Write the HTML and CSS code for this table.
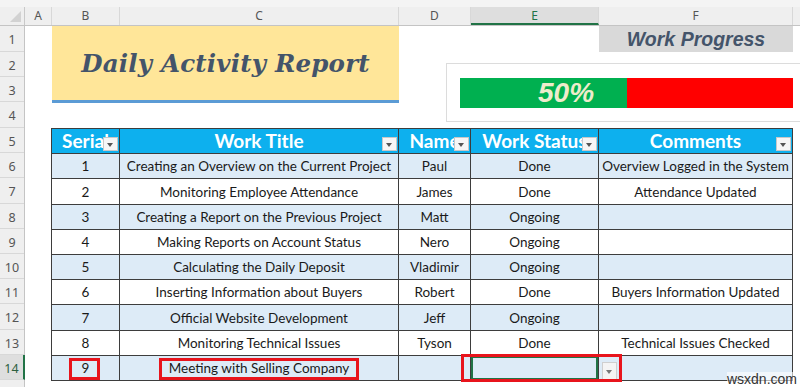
FILE: index.html
```html
<!DOCTYPE html>
<html>
<head>
<meta charset="utf-8">
<link rel="stylesheet" href="styles.css">
</head>
<body>
<div class="app">
  <div class="toolstrip"></div>
  <div class="colhdr">
    <div class="corner"><span class="corner-tri"></span></div>
    <div class="ch w-a">A</div>
    <div class="ch w-b">B</div>
    <div class="ch w-c">C</div>
    <div class="ch w-d">D</div>
    <div class="ch w-e sel">E</div>
    <div class="ch w-f">F</div>
    <div class="ch w-g"></div>
  </div>
  <div class="main">
    <div class="rowhdr">
      <div class="rh h26">1</div>
      <div class="rh h25">2</div>
      <div class="rh h25">3</div>
      <div class="rh h26">4</div>
      <div class="rh h25">5</div>
      <div class="rh h25">6</div>
      <div class="rh h26">7</div>
      <div class="rh h25">8</div>
      <div class="rh h25">9</div>
      <div class="rh h25">10</div>
      <div class="rh h25">11</div>
      <div class="rh h26">12</div>
      <div class="rh h25">13</div>
      <div class="rh h25 sel">14</div>
      <div class="rh h25"></div>
    </div>
    <div class="grid">
      <div class="title"><span>Daily Activity Report</span></div>
      <div class="wp">Work Progress</div>
      <div class="progress">
        <div class="bar">
          <div class="done">50%</div>
          <div class="left"></div>
        </div>
      </div>
      <table class="report">
        <colgroup>
          <col class="c1"><col class="c2"><col class="c3"><col class="c4"><col class="c5">
        </colgroup>
        <thead>
          <tr class="r25">
            <th>Serial<span class="flt"></span></th>
            <th>Work Title<span class="flt"></span></th>
            <th>Name<span class="flt"></span></th>
            <th>Work Status<span class="flt"></span></th>
            <th>Comments<span class="flt"></span></th>
          </tr>
        </thead>
        <tbody>
          <tr class="r25 band"><td>1</td><td>Creating an Overview on the Current Project</td><td>Paul</td><td>Done</td><td>Overview Logged in the System</td></tr>
          <tr class="r26"><td>2</td><td>Monitoring Employee Attendance</td><td>James</td><td>Done</td><td>Attendance Updated</td></tr>
          <tr class="r25 band"><td>3</td><td>Creating a Report on the Previous Project</td><td>Matt</td><td>Ongoing</td><td></td></tr>
          <tr class="r25"><td>4</td><td>Making Reports on Account Status</td><td>Nero</td><td>Ongoing</td><td></td></tr>
          <tr class="r25 band"><td>5</td><td>Calculating the Daily Deposit</td><td>Vladimir</td><td>Ongoing</td><td></td></tr>
          <tr class="r25"><td>6</td><td>Inserting Information about Buyers</td><td>Robert</td><td>Done</td><td>Buyers Information Updated</td></tr>
          <tr class="r26 band"><td>7</td><td>Official Website Development</td><td>Jeff</td><td>Ongoing</td><td></td></tr>
          <tr class="r25"><td>8</td><td>Monitoring Technical Issues</td><td>Tyson</td><td>Done</td><td>Technical Issues Checked</td></tr>
          <tr class="r25 band">
            <td class="pos">9<span class="mark mark-serial"></span></td>
            <td class="pos">Meeting with Selling Company<span class="mark mark-title"></span></td>
            <td></td>
            <td class="pos active"><span class="dd"></span><span class="mark mark-status"></span></td>
            <td></td>
          </tr>
        </tbody>
      </table>
    </div>
  </div>
  <div class="watermark">wsxdn.com</div>
</div>
</body>
</html>
```

FILE: styles.css
```css
html, body {
  margin: 0;
  padding: 0;
  background: #ffffff;
}
body {
  width: 800px;
  height: 387px;
  overflow: hidden;
  font-family: "Lato", "Liberation Sans", sans-serif;
}
.app {
  position: relative;
  width: 800px;
  height: 387px;
  overflow: hidden;
}
.toolstrip {
  height: 7px;
  background: #f4f4f4;
}
.colhdr {
  display: flex;
  height: 18px;
  background: #efefef;
  border-bottom: 1px solid #c4c4c4;
}
.corner {
  position: relative;
  width: 24px;
  border-right: 1px solid #c9c9c9;
}
.corner-tri {
  position: absolute;
  right: 3px;
  bottom: 3px;
  width: 0;
  height: 0;
  border-left: 11px solid transparent;
  border-bottom: 11px solid #d2d2d2;
}
.ch {
  box-sizing: border-box;
  border-right: 1px solid #d8d8d8;
  font-family: "Noto Sans", "Open Sans", sans-serif;
  font-size: 12px;
  color: #555;
  text-align: center;
  line-height: 18px;
}
.w-a { width: 27px; }
.w-b { width: 68px; }
.w-c { width: 279px; }
.w-d { width: 72px; }
.w-e { width: 128px; }
.w-f { width: 194px; }
.w-g { flex: 1; border-right: none; }
.ch.sel {
  background: #dedede;
  color: #217346;
  border-bottom: 2px solid #217346;
  line-height: 17px;
}
.main {
  display: flex;
}
.rowhdr {
  width: 24px;
  flex: none;
  background: #efefef;
  border-right: 1px solid #c4c4c4;
  display: flex;
  flex-direction: column;
}
.rh {
  box-sizing: border-box;
  border-bottom: 1px solid #d8d8d8;
  font-family: "Noto Sans", "Open Sans", sans-serif;
  font-size: 12.5px;
  color: #555;
  text-align: center;
  padding-top: 6px;
  line-height: 16px;
}
.rh.h25 { height: 25px; }
.rh.h26 { height: 26px; }
.rh.sel {
  background: #dedede;
  color: #2d5f3f;
  border-right: 2px solid #217346;
  margin-right: -1px;
}
.grid {
  display: grid;
  grid-template-columns: 27px 68px 279px 72px 128px 194px 1fr;
  grid-template-rows: 26px 25px 25px 26px 25px 25px 26px 25px 25px 25px 25px 26px 25px 25px 25px;
  flex: 1;
}
.title {
  grid-column: 2 / 4;
  grid-row: 1 / 4;
  background: #ffe699;
  border-bottom: 3px solid #5b9bd5;
  margin-bottom: -1px;
  display: flex;
  align-items: center;
  justify-content: center;
}
.title span {
  font-family: "DejaVu Serif", "Liberation Serif", serif;
  font-weight: bold;
  font-style: italic;
  font-size: 24.5px;
  color: #44546a;
  letter-spacing: 0.2px;
  margin-top: 1px;
}
.wp {
  grid-column: 6;
  grid-row: 1;
  background: #d9d9d9;
  font-family: "Liberation Sans", Arial, sans-serif;
  font-weight: bold;
  font-style: italic;
  font-size: 19.5px;
  color: #44546a;
  text-align: center;
  line-height: 26px;
}
.progress {
  grid-column: 4 / 8;
  grid-row: 2 / 5;
  margin: 11px -20px 6px 47px;
  border: 1px solid #dcdcdc;
  padding: 14px 0 0 13px;
}
.bar {
  display: flex;
  height: 30px;
}
.done {
  width: 167px;
  background: #00b050;
  box-sizing: border-box;
  padding-left: 78px;
  font-family: "Liberation Sans", Arial, sans-serif;
  font-weight: bold;
  font-style: italic;
  font-size: 28px;
  line-height: 30px;
  color: #eeeccc;
}
.left {
  width: 166px;
  background: #ff0000;
}
.report {
  grid-column: 2 / 7;
  grid-row: 5 / 15;
  width: 742px;
  margin-left: -1px;
  border-collapse: collapse;
  table-layout: fixed;
  font-size: 13.5px;
  color: #1a1a1a;
}
.c1 { width: 68px; }
.c2 { width: 279px; }
.c3 { width: 72px; }
.c4 { width: 128px; }
.c5 { width: 194px; }
.r25 { height: 25px; }
.r26 { height: 26px; }
.report th,
.report td {
  border: 1px solid #3d3d3d;
  padding: 0;
  text-align: center;
  vertical-align: middle;
  white-space: nowrap;
  overflow: hidden;
}
.report th {
  position: relative;
  background: #0db0ee;
  color: #ffffff;
  font-size: 19px;
  font-weight: bold;
  line-height: 22px;
}
.report td {
  line-height: 18px;
}
.band td {
  background: #ddebf7;
}
.flt {
  position: absolute;
  right: 1px;
  bottom: 2px;
  width: 13px;
  height: 12px;
  background: #f6f6f6;
  border: 1px solid #c8c8c8;
}
.flt::after {
  content: "";
  position: absolute;
  left: 3px;
  top: 5px;
  border-left: 3.5px solid transparent;
  border-right: 3.5px solid transparent;
  border-top: 4px solid #555;
}
.report td.pos {
  position: relative;
  overflow: visible;
}
.mark {
  position: absolute;
  box-sizing: border-box;
  border: 3px solid #e8141c;
  pointer-events: none;
}
.mark-serial {
  left: 17px;
  top: 2px;
  width: 31px;
  height: 22px;
}
.mark-title {
  left: 39px;
  top: 2px;
  width: 200px;
  height: 22px;
}
.mark-status {
  left: -10px;
  top: -2px;
  width: 161px;
  height: 28px;
}
.report td.active {
  box-shadow: inset 0 0 0 2px #217346;
}
.dd {
  position: absolute;
  left: 131px;
  top: 6px;
  width: 13px;
  height: 16px;
  background: #f4f4f4;
  border: 1px solid #cfcfcf;
}
.dd::after {
  content: "";
  position: absolute;
  left: 3px;
  top: 7px;
  border-left: 3.5px solid transparent;
  border-right: 3.5px solid transparent;
  border-top: 4px solid #777;
}
.watermark {
  position: absolute;
  right: 3px;
  bottom: 0;
  font-family: "Liberation Sans", Arial, sans-serif;
  font-size: 14px;
  line-height: 15px;
  color: #333;
  background: rgba(255, 255, 255, 0.6);
}
```
